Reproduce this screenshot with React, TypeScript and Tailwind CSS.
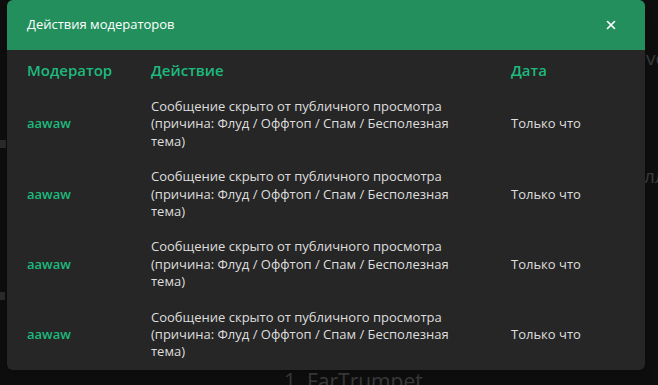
import React from "react";
import { X } from "lucide-react";

const rows = Array.from({ length: 4 }, () => ({
  moderator: "aawaw",
  action:
    "Сообщение скрыто от публичного просмотра (причина: Флуд / Оффтоп / Спам / Бесполезная тема)",
  date: "Только что",
}));

export default function App() {
  return (
    <div
      className="relative w-[658px] h-[385px] overflow-hidden bg-[#0e0e0e]"
      style={{ fontFamily: '"Open Sans", "Noto Sans", sans-serif' }}
    >
      {/* page behind the overlay */}
      <div className="absolute left-[646px] top-[44px] text-[19px] text-[#3c3c3c]">vo</div>
      <div className="absolute left-[644px] top-[162px] text-[19px] text-[#3c3c3c]">лл</div>
      <div className="absolute left-[0px] top-[140px] h-[8px] w-[6px] bg-[#2a2a2a]" />
      <div className="absolute left-[0px] top-[292px] h-[8px] w-[5px] bg-[#2a2a2a]" />
      <div className="absolute left-[284px] top-[366px] text-[21px] text-[#3a3a3a]">
        1. FarTrumpet
      </div>

      <div className="relative z-10 pl-[7px]">
        <div className="w-[638px] h-[370px] rounded-md overflow-hidden bg-[#262626] shadow-lg">
          <div className="flex h-[50px] items-center justify-between bg-[#238f5c] pl-[20px] pr-[27px]">
            <span className="text-[13px] text-white">Действия модераторов</span>
            <X className="h-[14px] w-[14px] text-white" strokeWidth={2.8} />
          </div>

          <div className="grid grid-cols-[124px_360px_1fr] px-[20px] pt-[10px] pb-[10px] text-[15px] leading-[20px] font-semibold text-[#1dba7d]">
            <div>Модератор</div>
            <div>Действие</div>
            <div>Дата</div>
          </div>

          {rows.map((row, i) => (
            <div
              key={i}
              className="grid grid-cols-[124px_360px_1fr] items-center px-[20px] pt-[8px] pb-[10px] text-[13px] leading-[17.4px]"
            >
              <div className="font-semibold text-[#1dba7d]">{row.moderator}</div>
              <div className="max-w-[312px] text-[#dedede]">{row.action}</div>
              <div className="text-[#dedede]">{row.date}</div>
            </div>
          ))}
        </div>
      </div>
    </div>
  );
}
